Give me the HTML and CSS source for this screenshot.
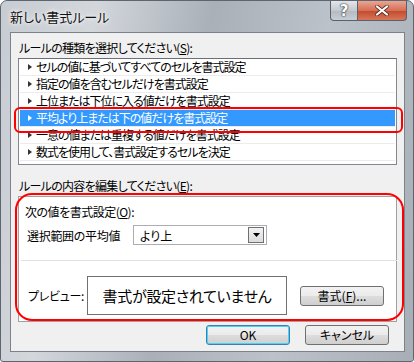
FILE: index.html
```html
<!DOCTYPE html>
<html lang="ja">
<head>
  <meta charset="UTF-8" />
  <title>新しい書式ルール</title>
  <link rel="stylesheet" href="styles.css">
</head>
<body>
  <div class="window">
    <div class="titlebar">
      <span class="title">新しい書式ルール</span>
      <div class="caps">
        <div class="cap help">?</div>
        <div class="cap close">
          <svg width="14" height="11" viewBox="0 0 14 11"><path d="M2 1.5 L12 9.5 M12 1.5 L2 9.5" stroke="#5a2a20" stroke-width="3.6" stroke-linecap="round"/><path d="M2 1.5 L12 9.5 M12 1.5 L2 9.5" stroke="#fff" stroke-width="2.2" stroke-linecap="round"/></svg>
        </div>
      </div>
    </div>

    <div class="client">
      <div class="label">ルールの種類を選択してください(<u>S</u>):</div>
      <ul class="list">
        <li>セルの値に基づいてすべてのセルを書式設定</li>
        <li>指定の値を含むセルだけを書式設定</li>
        <li>上位または下位に入る値だけを書式設定</li>
        <li class="selected">平均より上または下の値だけを書式設定</li>
        <li>一意の値または重複する値だけを書式設定</li>
        <li>数式を使用して、書式設定するセルを決定</li>
      </ul>

      <div class="label second">ルールの内容を編集してください(<u>E</u>):</div>
      <div class="panel">
        <div class="plabel">次の値を書式設定(<u>O</u>):</div>
        <div class="row">
          <span class="rowlabel">選択範囲の平均値</span>
          <div class="combo">
            <span>より上</span>
            <div class="dropbtn"><svg width="7" height="4" viewBox="0 0 7 4"><path d="M0 0 H7 L3.5 4 Z" fill="#000"/></svg></div>
          </div>
        </div>
        <div class="sep"></div>
        <div class="preview-row">
          <span class="rowlabel">プレビュー:</span>
          <div class="preview">書式が設定されていません</div>
          <div class="btn fmt">書式(<u>F</u>)...</div>
        </div>
      </div>

      <div class="buttons">
        <div class="btn default">OK</div>
        <div class="btn">キャンセル</div>
      </div>

      <div class="mark mark-item"></div>
      <div class="mark mark-panel"></div>
    </div>
  </div>
</body>
</html>
```

FILE: styles.css
```css
body {
  margin: 0;
  font-family: "Noto Sans CJK JP", sans-serif;
  font-size: 12px;
  font-feature-settings: "palt";
  color: #000;
  background: #fff;
}
.window {
  width: 414px;
  height: 362px;
  box-sizing: border-box;
  display: flex;
  flex-direction: column;
  border: 1px solid #5d6670;
  border-radius: 7px 7px 3px 3px;
  background: linear-gradient(100deg, #c7ccd2 0%, #d3d7dc 20%, #a9b0b8 45%, #bcc2c9 70%, #a7aeb6 100%);
  overflow: hidden;
}
.titlebar {
  height: 31px;
  display: flex;
  justify-content: space-between;
  align-items: flex-start;
  flex-shrink: 0;
}
.title {
  margin: 8px 0 0 9px;
  font-size: 13px;
  line-height: 16px;
  color: #111;
  text-shadow: 0 0 6px #fff, 0 0 3px #fff;
}
.caps {
  display: flex;
  margin-right: 6px;
}
.cap {
  height: 20px;
  display: flex;
  align-items: center;
  justify-content: center;
  border: 1px solid #59616b;
  border-top: none;
  box-sizing: border-box;
}
.help {
  width: 28px;
  border-radius: 0 0 0 4px;
  background: linear-gradient(#e3e6ea, #c4c9cf 50%, #b3b9c0 51%, #c9ced4);
  font-family: "DejaVu Sans", sans-serif;
  font-weight: bold;
  font-size: 15px;
  color: #fff;
  text-shadow: 0 0 1px #222, 0 0 2px #222;
}
.close {
  width: 49px;
  border-left: none;
  border-radius: 0 0 4px 0;
  background: linear-gradient(#e9a592, #d56f55 50%, #c24a2c 51%, #d8765a);
}
.client {
  flex: 1;
  position: relative;
  margin: 0 8px 9px 9px;
  border: 1px solid #7a828c;
  background: #f0f0f0;
  padding: 8px 7px 0 7px;
  display: flex;
  flex-direction: column;
}
.label {
  line-height: 14px;
  height: 14px;
  padding-left: 1px;
  letter-spacing: -0.7px;
}
.label.second {
  margin-top: 14px;
}
.list {
  list-style: none;
  margin: 3px 0 0 0;
  padding: 0 1px;
  height: 107px;
  box-sizing: border-box;
  border: 1px solid #828790;
  border-top-color: #6a6f77;
  background: #fff;
}
.list li {
  height: 17px;
  line-height: 16px;
  box-sizing: border-box;
  border-bottom: 1px solid #ececec;
  padding-left: 16px;
  position: relative;
  white-space: nowrap;
  letter-spacing: -1px;
}
.list li::before {
  content: "";
  position: absolute;
  left: 8px;
  top: 5px;
  border-left: 4px solid #333;
  border-top: 3px solid transparent;
  border-bottom: 3px solid transparent;
}
.list li.selected {
  background: #3399ff;
  color: #fff;
}
.list li.selected::before {
  border-left-color: #fff;
}
.panel {
  margin-top: 3px;
  height: 126px;
  box-sizing: border-box;
  border: 1px solid #a0a0a0;
  background: #fff;
  padding: 8px 0 0 6px;
}
.plabel {
  line-height: 14px;
  letter-spacing: -0.5px;
}
.row {
  display: flex;
  align-items: center;
  margin-top: 6px;
  padding-left: 2px;
}
.rowlabel {
  width: 106px;
  letter-spacing: -0.3px;
}
.combo {
  width: 134px;
  height: 20px;
  box-sizing: border-box;
  border: 1px solid #abadb3;
  display: flex;
  align-items: center;
  justify-content: space-between;
  padding-left: 6px;
}
.dropbtn {
  width: 16px;
  height: 16px;
  margin-right: 2px;
  box-sizing: border-box;
  border: 1px solid #707070;
  background: linear-gradient(#f2f2f2, #dcdcdc);
  display: flex;
  align-items: center;
  justify-content: center;
}
.sep {
  height: 1px;
  background: #e0e0e0;
  margin: 15px 0 0 -4px;
  width: 376px;
}
.preview-row {
  display: flex;
  align-items: center;
  margin-top: 15px;
  padding-left: 3px;
}
.preview-row .rowlabel {
  width: 59px;
}
.preview {
  width: 200px;
  height: 39px;
  box-sizing: border-box;
  border: 1px solid #707070;
  display: flex;
  align-items: center;
  justify-content: center;
  font-size: 15px;
  letter-spacing: -0.3px;
}
.btn {
  height: 20px;
  width: 84px;
  box-sizing: border-box;
  border: 1px solid #707070;
  border-radius: 3px;
  background: linear-gradient(#f2f2f2 0%, #ebebeb 50%, #dddddd 51%, #cfcfcf 100%);
  display: flex;
  align-items: center;
  justify-content: center;
  line-height: 14px;
}
.btn.fmt {
  margin-left: 13px;
}
.btn.default {
  border-color: #3c7fb1;
  box-shadow: inset 0 0 0 1px #48d4f8;
}
.buttons {
  display: flex;
  justify-content: flex-end;
  gap: 15px;
  margin-top: 3px;
  padding-right: 8px;
}
.mark {
  position: absolute;
  border: 2px solid #ff0000;
  box-sizing: border-box;
  pointer-events: none;
}
.mark-item {
  left: 3px;
  top: 74px;
  width: 389px;
  height: 26px;
  border-radius: 6px;
}
.mark-panel {
  left: 4px;
  top: 160px;
  width: 389px;
  height: 128px;
  border-radius: 17px;
}
```
